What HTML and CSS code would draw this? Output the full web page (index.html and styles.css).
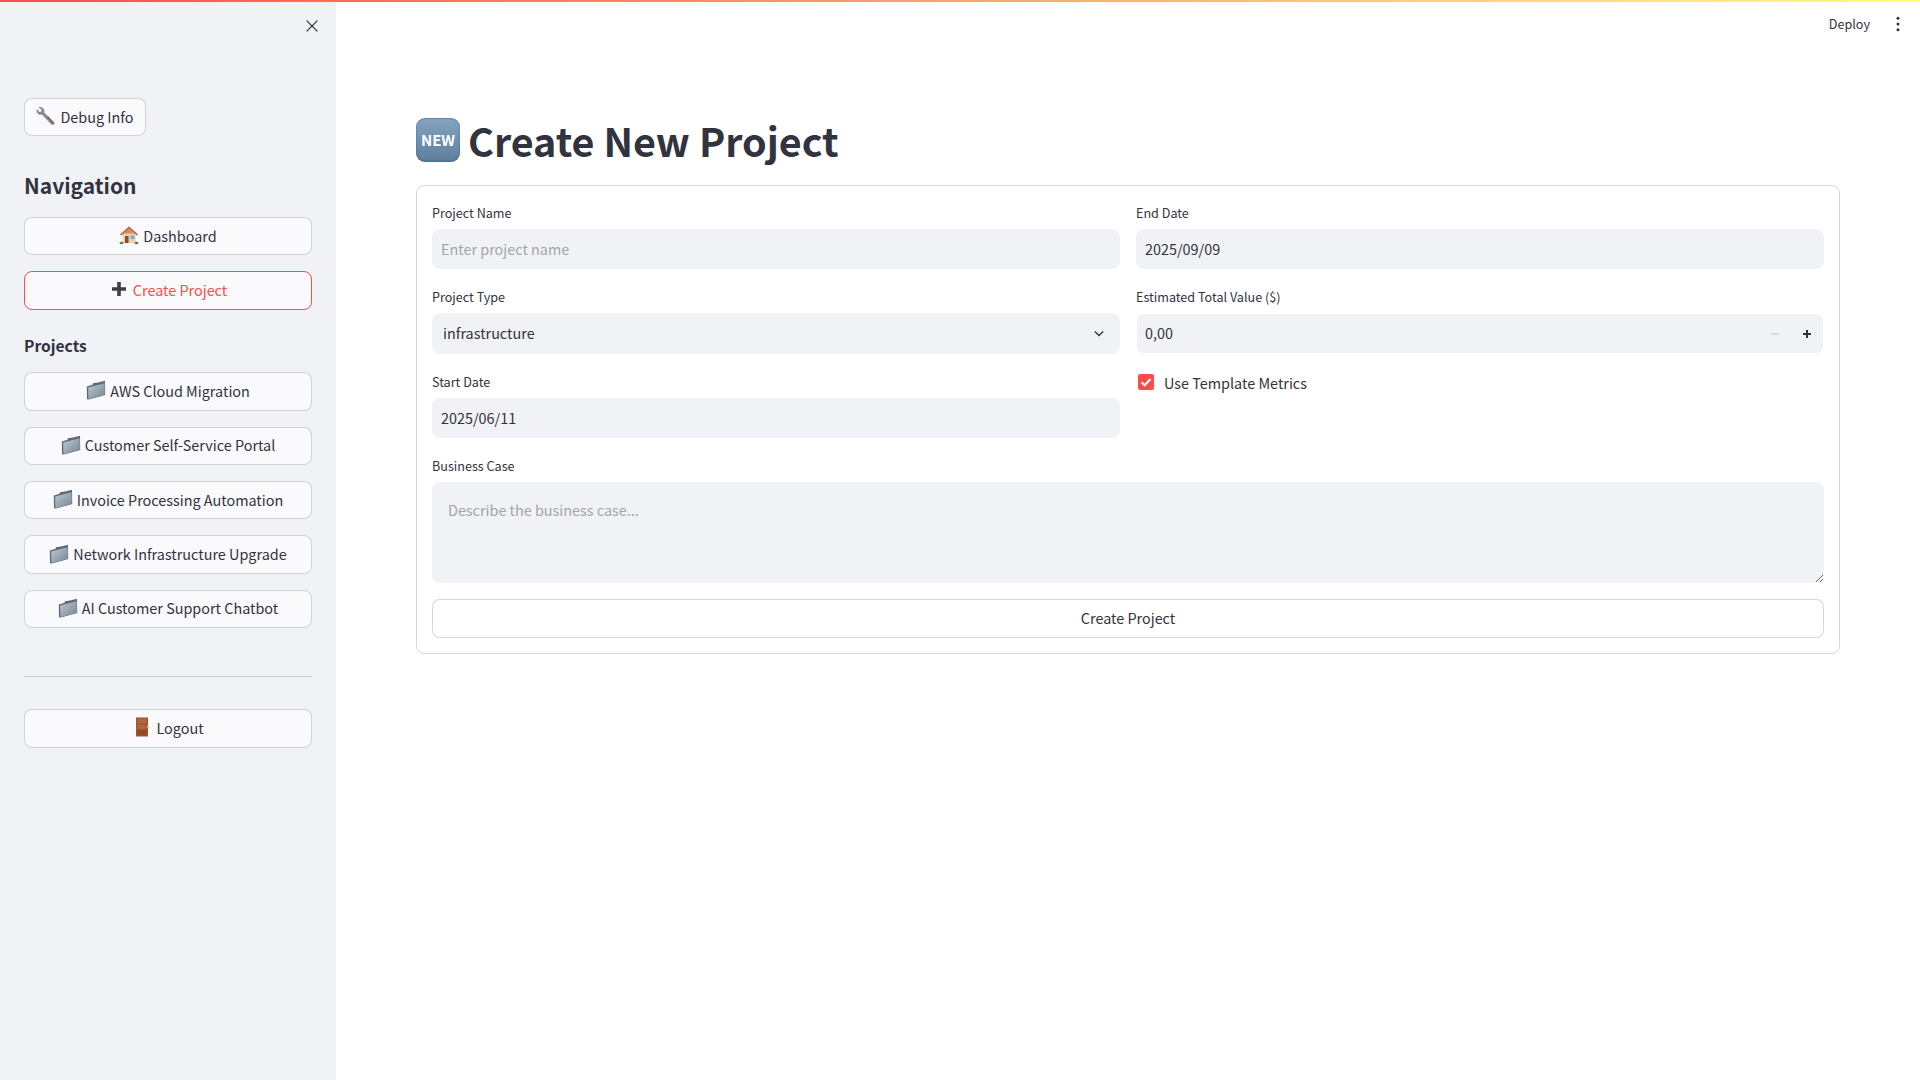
FILE: index.html
```html
<!DOCTYPE html>
<html lang="en">
<head>
<meta charset="utf-8">
<title>Create New Project</title>
<link rel="stylesheet" href="styles.css">
</head>
<body>
<svg class="defs" width="0" height="0" aria-hidden="true">
  <defs>
    <linearGradient id="fg" x1="0" y1="0" x2="1" y2="1"><stop offset="0" stop-color="#c0cbd5"/><stop offset="1" stop-color="#72838f"/></linearGradient>
    <symbol id="folder" viewBox="0 0 20 20">
      <path d="M.8 6.500 1 19.300 3 19.600 19.200 15 19 .8 12 2.400 7 3.200 6.500 4.800Z" fill="#5b6a78"/>
      <path d="M2.200 7.600 18.500 3.200Q19 13 18.800 14.300 18.700 14.800 18 15L3.200 19Q2.300 19.100 2.300 18.200Z" fill="url(#fg)"/>
    </symbol>
  </defs>
</svg>
<div class="deco"></div>
<div class="app">
  <aside class="sidebar">
    <div class="side-top">
      <svg class="close" viewBox="0 0 12 12" width="12" height="12"><path d="M.6.6l10.800 10.800M11.400.6.6 11.400" stroke="#31333f" stroke-width="1.300" fill="none"/></svg>
    </div>
    <button class="btn btn-fit">
      <svg class="emoji" viewBox="0 0 20 20"><path d="M2.500 1.200l3 2.600-.4 1.700-1.700.4-2.600-2.800c-.6 2.600.2 4.600 2 5.400 1 .5 2 .4 3 .1l9.300 9.700c.8.800 2 .8 2.700 0 .7-.7.700-1.800 0-2.500L8.200 6.400c.4-1.300.2-2.600-.6-3.600C6.500 1.300 4.500.6 2.500 1.200Z" fill="#858d94"/><path d="M11 11.500l6.200 6.300c.5.500 1 .5 1.400.1L12.300 10.600Z" fill="#8d5a4c"/></svg>
      <span>Debug Info</span>
    </button>
    <h2 class="nav-title">Navigation</h2>
    <div class="stack">
      <button class="btn">
        <svg class="emoji" viewBox="0 0 20 20"><rect x="3.500" y="8" width="13" height="10" fill="#ecd3a6"/><path d="M10 1.500 19 9.500l-1 1L10 4 2 10.500l-1-1Z" fill="#b5533c"/><path d="M10 3 3.500 8.500h13Z" fill="#d68a5e"/><rect x="6" y="11" width="3.500" height="7" fill="#8a4a3a"/><rect x="11.500" y="10.500" width="4" height="3.500" fill="#6fb0dc"/><ellipse cx="2.500" cy="18" rx="2" ry="1.300" fill="#4f8a3c"/><ellipse cx="17.500" cy="18" rx="2" ry="1.300" fill="#4f8a3c"/></svg>
        <span>Dashboard</span>
      </button>
      <button class="btn btn-active">
        <svg class="emoji" viewBox="-2 -2 20 20"><path d="M6.200 1h3.600v5.200H15v3.600H9.800V15H6.200V9.800H1V6.200h5.200Z" fill="#3d3f46"/></svg>
        <span>Create Project</span>
      </button>
    </div>
    <h3 class="proj-title">Projects</h3>
    <div class="stack">
      <button class="btn"><svg class="emoji"><use href="#folder"/></svg><span>AWS Cloud Migration</span></button>
      <button class="btn"><svg class="emoji"><use href="#folder"/></svg><span>Customer Self-Service Portal</span></button>
      <button class="btn"><svg class="emoji"><use href="#folder"/></svg><span>Invoice Processing Automation</span></button>
      <button class="btn"><svg class="emoji"><use href="#folder"/></svg><span>Network Infrastructure Upgrade</span></button>
      <button class="btn"><svg class="emoji"><use href="#folder"/></svg><span>AI Customer Support Chatbot</span></button>
    </div>
    <hr class="rule">
    <button class="btn">
      <svg class="emoji" viewBox="0 0 20 20"><rect x="4" y=".5" width="12" height="19" fill="#a0532f"/><rect x="5.200" y="1.800" width="9.600" height="4.800" fill="#b5653c"/><rect x="5.200" y="8" width="9.600" height="3.800" fill="#b5653c"/><rect x="5.200" y="13" width="9.600" height="5" fill="#8f4a2a"/><rect x="15" y="8.500" width="1.600" height="2.500" fill="#e0b040"/></svg>
      <span>Logout</span>
    </button>
  </aside>
  <div class="main">
    <header class="topbar">
      <span class="deploy">Deploy</span>
      <svg class="kebab" viewBox="0 0 4 16" width="4" height="16"><circle cx="2" cy="2.300" r="1.500"/><circle cx="2" cy="8" r="1.500"/><circle cx="2" cy="13.700" r="1.500"/></svg>
    </header>
    <div class="content">
      <h1 class="title"><span class="new-badge">NEW</span><span class="title-text">Create New Project</span></h1>
      <form class="form">
        <div class="form-grid">
          <div class="col">
            <div class="field">
              <label class="label">Project Name</label>
              <input class="input" type="text" placeholder="Enter project name">
            </div>
            <div class="field">
              <label class="label">Project Type</label>
              <div class="select"><span>infrastructure</span>
                <svg viewBox="0 0 12 8" width="10" height="7"><path d="M1 1.500 6 6.500l5-5" fill="none" stroke="#31333f" stroke-width="1.700"/></svg>
              </div>
            </div>
            <div class="field">
              <label class="label">Start Date</label>
              <input class="input" type="text" value="2025/06/11">
            </div>
          </div>
          <div class="col">
            <div class="field">
              <label class="label">End Date</label>
              <input class="input" type="text" value="2025/09/09">
            </div>
            <div class="field">
              <label class="label">Estimated Total Value ($)</label>
              <div class="number">
                <input class="num-input" type="text" value="0,00">
                <svg class="step" viewBox="0 0 8 8" width="8" height="8"><rect x="0" y="3.200" width="8" height="1.600" fill="#d3d5dc"/></svg>
                <svg class="step" viewBox="0 0 8 8" width="8" height="8"><path d="M3 0h2v3h3v2H5v3H3V5H0V3h3Z" fill="#31333f"/></svg>
              </div>
            </div>
            <div class="check-row">
              <span class="check"><svg viewBox="0 0 16 16" width="16" height="16"><path d="M3.500 8.200 6.700 11.300 12.500 5" fill="none" stroke="#fff" stroke-width="2"/></svg></span>
              <span class="check-text">Use Template Metrics</span>
            </div>
          </div>
        </div>
        <div class="field">
          <label class="label">Business Case</label>
          <textarea class="area" placeholder="Describe the business case..."></textarea>
        </div>
        <button class="btn submit" type="button"><span>Create Project</span></button>
      </form>
    </div>
  </div>
</div>
</body>
</html>
```

FILE: styles.css
```css
html, body {
  margin: 0;
  height: 100%;
  overflow: hidden;
  background: #fff;
}
body {
  display: flex;
  flex-direction: column;
  font-family: "Noto Sans CJK JP", "Noto Sans", sans-serif;
  font-size: 14.400px;
  color: #31333f;
}
.defs { position: absolute; }
.deco {
  height: 2px;
  flex: none;
  background: linear-gradient(90deg, #ff4b4b, #fffd80);
}
.app { flex: 1; display: flex; min-height: 0; }

.sidebar {
  width: 336px;
  flex: none;
  box-sizing: border-box;
  padding: 0 24px;
  background: #f0f2f6;
  display: flex;
  flex-direction: column;
  align-items: stretch;
}
.side-top {
  height: 96px;
  display: flex;
  justify-content: flex-end;
  align-items: flex-start;
  padding-top: 18px;
  box-sizing: border-box;
}
.close { display: block; margin-right: -6px; }

.btn {
  height: 38.400px;
  box-sizing: border-box;
  width: 100%;
  display: flex;
  align-items: center;
  justify-content: center;
  gap: 4px;
  padding: 0 12px;
  background: #fafafc;
  border: 1px solid rgba(49, 51, 63, .2);
  border-radius: 8px;
  font: inherit;
  line-height: 24px;
  color: #31333f;
  white-space: nowrap;
}
.btn span { margin-top: -1px; }
.btn-fit { width: 122px; }
.btn-active { border-color: #ff4b4b; color: #ff4b4b; }
.emoji { width: 20px; height: 20px; flex: none; margin-top: -2px; }

.nav-title {
  margin: 31px 0 13.500px;
  font-size: 21px;
  line-height: 36px;
  font-weight: 600;
}
.proj-title {
  margin: 19px 0 11.500px;
  font-size: 15.600px;
  line-height: 32px;
  font-weight: 600;
}
.stack { display: flex; flex-direction: column; gap: 16px; }
.rule {
  width: 100%;
  margin: 48px 0 32px;
  border: 0;
  border-top: 1px solid rgba(49, 51, 63, .2);
}

.main { flex: 1; min-width: 0; display: flex; flex-direction: column; }
.topbar {
  height: 44px;
  flex: none;
  box-sizing: border-box;
  padding: 0 20px 0 0;
  display: flex;
  justify-content: flex-end;
  align-items: center;
  gap: 26px;
}
.deploy { font-size: 12.600px; line-height: 20px; }
.kebab { fill: #31333f; }
.content { padding: 0 80px; }
.title {
  margin: 0 0 22px;
  padding-top: 72px;
  height: 45px;
  box-sizing: content-box;
  display: flex;
  align-items: center;
  gap: 8px;
  font-size: 39.500px;
  line-height: 45px;
  font-weight: 700;
}
.title-text { margin-top: -2px; }
.new-badge {
  width: 44px;
  height: 44px;
  flex: none;
  box-sizing: border-box;
  display: flex;
  align-items: center;
  justify-content: center;
  margin-top: -2px;
  border-radius: 9px;
  background: linear-gradient(180deg, #84a2c2, #5e7e9e);
  box-shadow: inset 0 -1px 2px rgba(40, 70, 100, .4), inset 0 1px 1px rgba(60, 90, 120, .35);
  color: #fff;
  font-size: 15px;
  line-height: 20px;
  font-weight: 700;
}

.form {
  box-sizing: border-box;
  display: flex;
  flex-direction: column;
  gap: 16px;
  padding: 15px;
  border: 1px solid rgba(49, 51, 63, .2);
  border-radius: 8px;
}
.form-grid { display: grid; grid-template-columns: 1fr 1fr; gap: 16px; }
.col { display: flex; flex-direction: column; gap: 16px; min-width: 0; }
.field { display: flex; flex-direction: column; }
.label {
  display: block;
  font-size: 12.600px;
  line-height: 24px;
  margin-bottom: 4px;
}
.input, .num-input, .area {
  font: inherit;
  color: #31333f;
  border: 0;
  outline: 0;
  background: #f0f2f6;
}
.input {
  height: 40px;
  box-sizing: border-box;
  padding: 0 9px 1px;
  border-radius: 8px;
  width: 100%;
}
.input::placeholder, .area::placeholder { color: #a3a5ad; opacity: 1; }
.select {
  height: 41px;
  box-sizing: border-box;
  padding: 0 16px 0 11px;
  display: flex;
  align-items: center;
  justify-content: space-between;
  background: #f0f2f6;
  border-radius: 8px;
}
.select span { margin-top: -2px; }
.number {
  height: 41px;
  box-sizing: border-box;
  border: 1px solid #fff;
  border-radius: 8px;
  background: #f0f2f6;
  display: flex;
  align-items: center;
  padding-right: 12px;
  gap: 24px;
}
.num-input {
  flex: 1;
  min-width: 0;
  height: 100%;
  padding: 0 8px 2px;
  box-sizing: border-box;
  border-radius: 8px;
  background: transparent;
}
.step { flex: none; }
.step + .step { margin-left: 0; }
.check-row {
  display: flex;
  align-items: center;
  gap: 10px;
  height: 24px;
  padding-left: 2px;
}
.check {
  width: 16px;
  height: 16px;
  border-radius: 2px;
  background: #ff4b4b;
  display: block;
}
.check svg { display: block; }
.area {
  display: block;
  width: 100%;
  height: 100.600px;
  box-sizing: border-box;
  padding: 17px 16px 16px;
  border-radius: 8px;
  resize: vertical;
}
.submit { background: #fff; height: 39.400px; }
```
